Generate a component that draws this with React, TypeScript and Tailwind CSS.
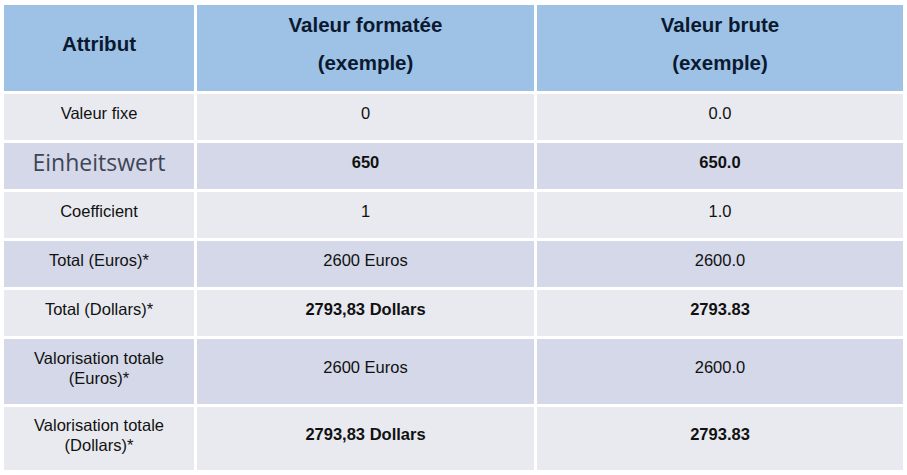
const rows: {
  label: string;
  formatted: string;
  raw: string;
  shade: "light" | "dark";
  bold?: boolean;
  special?: boolean;
}[] = [
  { label: "Valeur fixe", formatted: "0", raw: "0.0", shade: "light" },
  { label: "Einheitswert", formatted: "650", raw: "650.0", shade: "dark", bold: true, special: true },
  { label: "Coefficient", formatted: "1", raw: "1.0", shade: "light" },
  { label: "Total (Euros)*", formatted: "2600 Euros", raw: "2600.0", shade: "dark" },
  { label: "Total (Dollars)*", formatted: "2793,83 Dollars", raw: "2793.83", shade: "light", bold: true },
  { label: "Valorisation totale\n(Euros)*", formatted: "2600 Euros", raw: "2600.0", shade: "dark" },
  { label: "Valorisation totale\n(Dollars)*", formatted: "2793,83 Dollars", raw: "2793.83", shade: "light", bold: true },
];

function Cell({ children, className }: { children: React.ReactNode; className?: string }) {
  return (
    <div className={`flex items-center justify-center text-center pb-2 ${className ?? ""}`}>{children}</div>
  );
}

export default function App() {
  return (
    <div className="w-[907px] h-[475px] bg-white pl-[4px] pt-[5px] font-['Liberation_Sans',Arial,sans-serif]">
      <div className="grid grid-cols-[190px_337px_366px] gap-x-[3px] gap-y-[3px] grid-rows-[86px_46px_46px_46px_46px_46px_65px_63px]">
        {["Attribut", "Valeur formatée\n(exemple)", "Valeur brute\n(exemple)"].map((h) => (
          <Cell key={h} className="bg-[#9dc2e5] text-[20.5px] font-bold text-[#0b1930] leading-[38px] whitespace-pre-line">
            {h}
          </Cell>
        ))}
        {rows.map((r) => {
          const bg = r.shade === "light" ? "bg-[#e8eaef]" : "bg-[#d4d8e8]";
          const val = `text-[16.5px] text-[#111] ${r.bold ? "font-bold" : ""}`;
          return (
            <div key={r.label} className="contents">
              <Cell className={bg}>
                {r.special ? (
                  <span className="font-['Open_Sans',sans-serif] text-[23px] text-[#3f4457] leading-none">
                    {r.label}
                  </span>
                ) : (
                  <span className="text-[16.5px] text-[#111] leading-[20px] whitespace-pre-line">{r.label}</span>
                )}
              </Cell>
              <Cell className={bg}>
                <span className={val}>{r.formatted}</span>
              </Cell>
              <Cell className={bg}>
                <span className={val}>{r.raw}</span>
              </Cell>
            </div>
          );
        })}
      </div>
    </div>
  );
}
